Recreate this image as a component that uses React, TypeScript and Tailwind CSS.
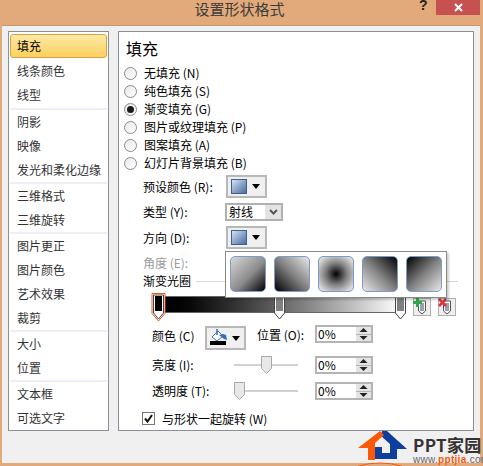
const navGroups = [
  ["线条颜色", "线型"],
  ["阴影", "映像", "发光和柔化边缘"],
  ["三维格式", "三维旋转"],
  ["图片更正", "图片颜色", "艺术效果", "裁剪"],
  ["大小", "位置"],
  ["文本框", "可选文字"],
]

const radios = [
  { label: "无填充 (N)" },
  { label: "纯色填充 (S)" },
  { label: "渐变填充 (G)", checked: true },
  { label: "图片或纹理填充 (P)" },
  { label: "图案填充 (A)" },
  { label: "幻灯片背景填充 (B)" },
]

const swatches = [
  "bg-[linear-gradient(135deg,#d8d8d8_0%,#8c8c8c_55%,#000000_100%)]",
  "bg-[linear-gradient(45deg,#000000_0%,#808080_50%,#e8e8e8_100%)]",
  "bg-[radial-gradient(circle,#000000_0%,#808080_45%,#d8d8d8_85%)]",
  "bg-[linear-gradient(225deg,#000000_0%,#808080_50%,#e8e8e8_100%)]",
  "bg-[linear-gradient(315deg,#e8e8e8_0%,#808080_50%,#000000_100%)]",
]

function Radio({ label, checked }: { label: string; checked?: boolean }) {
  return (
    <div className="flex h-[18px] items-center gap-[7px] pl-[5px]">
      <span className="flex h-[13px] w-[13px] items-center justify-center rounded-full border border-[#8a8a8a] bg-gradient-to-br from-[#e8e8e8] to-white">
        {checked && <span className="h-[7px] w-[7px] rounded-full bg-[#1a1a1a]" />}
      </span>
      <span className="text-xs whitespace-nowrap text-black">{label}</span>
    </div>
  )
}

function DropButton({ children, className }: { children: React.ReactNode; className: string }) {
  return (
    <div className={`flex items-center gap-[5px] border-2 border-[#b8b8b8] bg-[#f0f0f0] ${className}`}>
      {children}
      <svg width="8" height="5" viewBox="0 0 8 5">
        <path d="M0 0h8L4 5z" fill="#000" />
      </svg>
    </div>
  )
}

function BluePreset() {
  return (
    <span className="ml-[3px] h-[15px] w-[16px] border border-[#3d5f92] bg-gradient-to-br from-[#d5e4f5] to-[#4a6c9f]" />
  )
}

function Spinner({ value }: { value: string }) {
  return (
    <div className="flex h-[18px] w-[58px] border-2 border-[#b4b4b4] bg-white">
      <span className="flex-1 pl-[1px] text-xs leading-[14px]">{value}</span>
      <div className="flex w-[15px] flex-col justify-between bg-[#e4e4e4]">
        <svg width="15" height="6" viewBox="0 0 15 6">
          <path d="M7.500 1l4 4h-8z" fill="#222" />
        </svg>
        <div className="h-[1px] bg-[#b4b4b4]" />
        <svg width="15" height="6" viewBox="0 0 15 6">
          <path d="M3.500 1h8l-4 4z" fill="#222" />
        </svg>
      </div>
    </div>
  )
}

function Stop({ x, selected }: { x: string; selected?: boolean }) {
  return (
    <svg className={`absolute top-0 ${x}`} width="15" height="29" viewBox="0 0 15 29">
      {selected && <path d="M1 .5h13v20L7.5 28 1 20.500z" fill="#fff" stroke="#f0540e" />}
      <path d="M2.500 2h10v18l-5 6-5-6z" fill="#fff" stroke="#444" />
      <rect x="4" y="3" width="7" height="15" fill={selected ? "#000" : "#808080"} />
    </svg>
  )
}

function Slider({ thumb }: { thumb: string }) {
  return (
    <div className="relative ml-[5px] h-[18px] w-[64px]">
      <div className="absolute top-[8px] h-[2px] w-full bg-[#d0d0d0]" />
      <svg className={`absolute top-0 ${thumb}`} width="11" height="18" viewBox="0 0 11 18">
        <path d="M.5.500h10v12l-5 5-5-5z" fill="#e8e8e8" stroke="#a8a8a8" />
      </svg>
    </div>
  )
}

function StopButton({ add }: { add?: boolean }) {
  return (
    <div className="relative flex h-[18px] w-[18px] items-center justify-center border border-[#b0b0b0] bg-[#eeeeee]">
      <svg width="10" height="15" viewBox="0 0 10 15">
        <path d="M1.500 1h7v10l-3.500 3-3.500-3z" fill="#fff" stroke="#555" />
        <rect x="3" y="3" width="4" height="8" fill="#9aa0b0" />
      </svg>
      <svg className="absolute -top-[1px] -left-[1px]" width="9" height="9" viewBox="0 0 9 9">
        {add ? (
          <path d="M3 0h3v3h3v3H6v3H3V6H0V3h3z" fill="#2fa84a" />
        ) : (
          <path d="M1 1l7 7M8 1L1 8" stroke="#e0303a" strokeWidth="2.500" />
        )}
      </svg>
    </div>
  )
}

export default function App() {
  return (
    <div className="relative flex h-[466px] w-[483px] flex-col overflow-hidden bg-[#e2aa7a] font-['Noto_Sans_CJK_SC','Liberation_Sans',sans-serif]">
      {/* title bar */}
      <div className="relative flex h-[25px] shrink-0 justify-center pr-[4px] text-[15px] leading-[18px] text-[#3b3b3b]">
        设置形状格式
        <span className="absolute top-0 left-[419px] font-['Liberation_Sans',sans-serif] text-sm leading-[11px] font-bold text-[#222]">?</span>
        <div className="absolute top-0 left-[436px] flex h-[15px] w-[44px] items-center justify-center bg-[#c75050]">
          <svg width="9" height="9" viewBox="0 0 9 9">
            <path d="M1 1l7 7M8 1L1 8" stroke="#fff" strokeWidth="2" />
          </svg>
        </div>
      </div>

      {/* dialog body */}
      <div className="ml-[2px] flex h-[438px] w-[478px] gap-[9px] border-t border-[#c9956b] bg-[#f0f0f0] pt-[5px] pl-[6px]">
        {/* left nav */}
        <div className="flex h-[400px] w-[101px] flex-col border border-[#8a9099] bg-white px-[1px] pt-[2px] text-xs text-[#333]">
          <div className="flex h-[24px] shrink-0 items-center rounded-[3px] border border-[#d8a24a] bg-gradient-to-b from-[#fde9a4] to-[#fdd05c] pl-[6px] text-black">
            填充
          </div>
          {navGroups.map((group, i) => (
            <div key={i} className={i === 0 ? "pt-[1px]" : ""}>
              {group.map((item) => (
                <div key={item} className="flex h-[24px] items-center pl-[7px] whitespace-nowrap">
                  {item}
                </div>
              ))}
              {i < navGroups.length - 1 && <div className={i === 0 ? "mt-[1px] h-[2px] bg-[#eeeef6]" : "h-[2px] bg-[#eeeef6]"} />}
            </div>
          ))}
        </div>

        {/* right panel */}
        <div className="relative flex h-[400px] w-[356px] flex-col border border-[#8a9099] bg-white pt-[5px] text-xs">
          <div className="h-[22px] pl-[7px] text-base leading-[22px]">填充</div>
          <div className="mt-[5px] flex flex-col">
            {radios.map((r) => (
              <Radio key={r.label} label={r.label} checked={r.checked} />
            ))}
          </div>

          <div className="mt-[3px] flex h-[23px] items-center pl-[24px]">
            <span className="w-[83px]">预设颜色 (R):</span>
            <DropButton className="h-[23px] w-[41px]">
              <BluePreset />
            </DropButton>
          </div>
          <div className="mt-[5px] flex h-[18px] items-center pl-[24px]">
            <span className="w-[82px]">类型 (Y):</span>
            <div className="flex h-[18px] w-[58px] border-2 border-[#b0b0b0] bg-white">
              <span className="w-[38px] pl-[2px] leading-[14px]">射线</span>
              <span className="flex flex-1 items-center justify-center bg-[#e4e4e4]">
                <svg width="9" height="7" viewBox="0 0 9 7">
                  <path d="M1 1l3.500 3.500L8 1" fill="none" stroke="#555" strokeWidth="2" />
                </svg>
              </span>
            </div>
          </div>
          <div className="mt-[5px] flex h-[23px] items-center pl-[24px]">
            <span className="w-[83px]">方向 (D):</span>
            <DropButton className="h-[23px] w-[41px]">
              <BluePreset />
            </DropButton>
          </div>
          <div className="mt-[5px] flex h-[18px] items-center pl-[24px] text-[#9a9a9a]">角度 (E):</div>
          <div className="flex h-[18px] items-center gap-[5px] pl-[24px]">
            <span>渐变光圈</span>
            <div className="h-[1px] w-[262px] bg-[#d8d8d8]" />
          </div>

          {/* gradient bar */}
          <div className="relative mt-[3px] flex h-[29px] items-start pl-[38px]">
            <div className="mt-[3px] h-[17px] w-[243px] border-y border-[#666] bg-gradient-to-r from-black to-white" />
            <Stop x="left-[32px]" selected />
            <Stop x="left-[153px]" />
            <Stop x="left-[274px]" />
            <div className="absolute top-[5px] left-[294px] flex gap-[7px]">
              <StopButton add />
              <StopButton />
            </div>
          </div>

          <div className="mt-[3px] flex h-[25px] items-start pl-[33px]">
            <span className="mt-[3px] w-[53px]">颜色 (C)</span>
            <div className="mt-[1px] flex h-[24px] w-[41px] items-center gap-[4px] border-2 border-[#b8b8b8] bg-[#f0f0f0] pl-[3px]">
              <svg width="18" height="18" viewBox="0 0 18 18">
                <path d="M2 8l6-6 5 5-6 5z" fill="#fff" stroke="#3d6fb0" />
                <path d="M7 0v6" stroke="#3d6fb0" strokeWidth="1.500" />
                <path d="M9 6l4-1 3 1 1 5-3-1z" fill="#2f6fc0" />
                <rect x="0" y="12" width="16" height="4" fill="#000" />
              </svg>
              <svg width="8" height="5" viewBox="0 0 8 5">
                <path d="M0 0h8L4 5z" fill="#000" />
              </svg>
            </div>
            <span className="mt-[2px] ml-[11px] w-[58px]">位置 (O):</span>
            <Spinner value="0%" />
          </div>
          <div className="mt-[6px] flex h-[18px] items-center pl-[33px]">
            <span className="w-[77px]">亮度 (I):</span>
            <Slider thumb="left-[27px]" />
            <div className="ml-[17px]">
              <Spinner value="0%" />
            </div>
          </div>
          <div className="mt-[8px] flex h-[18px] items-center pl-[33px]">
            <span className="w-[77px]">透明度 (T):</span>
            <Slider thumb="left-0" />
            <div className="ml-[17px]">
              <Spinner value="0%" />
            </div>
          </div>
          <div className="mt-[9px] flex h-[19px] items-center gap-[7px] pl-[23px]">
            <span className="flex h-[13px] w-[13px] items-center justify-center border border-[#777] bg-white">
              <svg width="9" height="9" viewBox="0 0 9 9">
                <path d="M1 4.500l2.500 3L8 1" fill="none" stroke="#111" strokeWidth="2" />
              </svg>
            </span>
            <span>与形状一起旋转 (W)</span>
          </div>

          {/* direction dropdown */}
          <div className="absolute top-[219px] left-[106px] flex h-[47px] w-[222px] gap-[8px] border border-[#8a8a8a] bg-white pt-[4px] pl-[4px] shadow-[2px_2px_2px_rgba(0,0,0,0.2)]">
            {swatches.map((s) => (
              <div key={s} className={`h-[36px] w-[36px] rounded-[5px] border border-[#7d9cc9] ${s}`} />
            ))}
          </div>
        </div>
      </div>

      {/* watermark */}
      <div className="absolute top-[431px] left-[358px] flex h-[35px] w-[125px] gap-[6px]">
        <svg className="shrink-0" width="49" height="35" viewBox="0 0 49 35">
          <path d="M24 0H29L49 18H39V28H17V16H24V22H32V13L23 5Z" fill="#0f3f9c" />
          <path d="M0 17L22 0L26 4L17 12V29H10V17Z" fill="#f85a0a" />
          <path d="M0 35Q22 29 44 35" fill="none" stroke="#f85a0a" />
        </svg>
        <div className="flex flex-col">
          <span className="mt-[6px] text-[17px] leading-[16px] font-bold tracking-[0.3px] whitespace-nowrap text-[#333]">PPT家园</span>
          <span className="mt-[2px] text-[10px] leading-[10px] font-['Liberation_Sans',sans-serif] tracking-[0.3px] whitespace-nowrap text-[#667]">
            www.<span className="font-bold text-[#f85a0a]">pptjia</span>.com
          </span>
        </div>
      </div>
    </div>
  )
}
